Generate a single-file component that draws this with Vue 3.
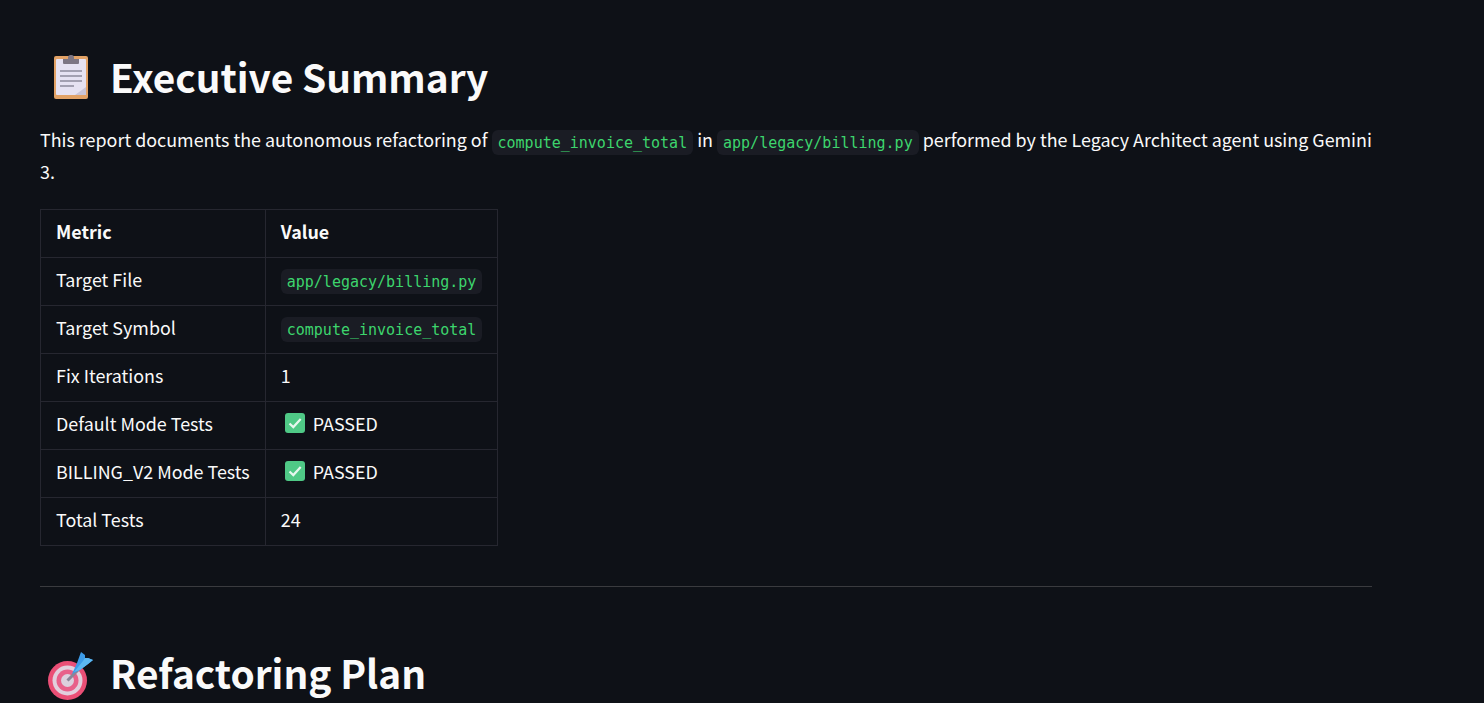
<script setup>
const rows = [
  { k: 'Target File', code: 'app/legacy/billing.py' },
  { k: 'Target Symbol', code: 'compute_invoice_total' },
  { k: 'Fix Iterations', v: '1' },
  { k: 'Default Mode Tests', pass: true },
  { k: 'BILLING_V2 Mode Tests', pass: true },
  { k: 'Total Tests', v: '24' },
]
</script>

<template>
  <main class="page">
    <article class="doc">
      <h1 class="title">
        <svg class="emoji" viewBox="0 0 42 46">
          <rect x="4" y="3" width="34" height="43" rx="2" fill="#e2a266" />
          <rect x="6" y="6" width="30" height="36" rx="1" fill="#e6e2f2" />
          <path d="M36 34v8H25z" fill="#c9c5d8" />
          <path d="M13 6h16v4a1 1 0 0 1-1 1H14a1 1 0 0 1-1-1z" fill="#7d7684" />
          <rect x="18" y="2" width="6" height="6" rx="2.5" fill="#7d7684" />
          <path d="M10 18h22M10 23h22M10 28h22M10 33h14" stroke="#8d8a9c" stroke-width="1.4" />
        </svg>
        <span>Executive Summary</span>
      </h1>
      <p class="lead">
        This report documents the autonomous refactoring of
        <code>compute_invoice_total</code> in <code>app/legacy/billing.py</code>
        performed by the Legacy Architect agent using Gemini 3.
      </p>
      <table class="table">
        <thead>
          <tr><th>Metric</th><th>Value</th></tr>
        </thead>
        <tbody>
          <tr v-for="r in rows" :key="r.k">
            <td>{{ r.k }}</td>
            <td>
              <code v-if="r.code">{{ r.code }}</code>
              <span v-else-if="r.pass" class="pass">
                <svg class="check" viewBox="0 0 20 20">
                  <rect width="20" height="20" rx="3" fill="#4fc986" />
                  <path d="M4.5 10.5l3.8 3.6 7.4-8" fill="none" stroke="#e6f7ee" stroke-width="2.2" />
                </svg>
                PASSED
              </span>
              <template v-else>{{ r.v }}</template>
            </td>
          </tr>
        </tbody>
      </table>
      <hr class="rule" />
      <h1 class="title">
        <svg class="emoji" viewBox="0 0 42 46">
          <circle cx="17.5" cy="31.5" r="19.5" fill="#ea4f76" />
          <circle cx="17.5" cy="31.5" r="15" fill="#e2cfdd" />
          <circle cx="17.5" cy="31.5" r="11" fill="#e8608a" />
          <circle cx="17.5" cy="31.5" r="6.5" fill="#dcd0de" />
          <path d="M17.5 31.5L28 21" stroke="#8a8598" stroke-width="3" />
          <path d="M22 25L27 14L31 3L35 6L35 9L38 9L43 11L38 15L30 21Z" fill="#3c9be8" />
          <path d="M24 23L33 12L35 9L38 9L43 11L38 15L30 21Z" fill="#5cb8f2" />
        </svg>
        <span>Refactoring Plan</span>
      </h1>
    </article>
  </main>
</template>

<style>
html, body { margin: 0; background: #0e1117; overflow: hidden; }
</style>

<style scoped>
.page {
  height: 703px;
  overflow: hidden;
  padding: 0 40px;
  background: #0e1117;
  color: #fafafa;
  font-family: "Noto Sans CJK SC", "Noto Sans", sans-serif;
}
.doc { width: 1332px; padding-top: 50px; }
.title {
  display: flex;
  align-items: center;
  gap: 18px;
  margin: 0 0 21px;
  padding-left: 10px;
  height: 52px;
  font-size: 38.8px;
  font-weight: 600;
  line-height: 52px;
}
.emoji { width: 42px; height: 46px; flex: none; overflow: visible; }
.lead { margin: 0 0 22px; font-size: 17.9px; line-height: 32px; }
code {
  display: inline-block;
  padding: 2px 6px 0;
  border-radius: 6px;
  background: #1a1c24;
  color: #3dd56d;
  font-family: "DejaVu Sans Mono", "Liberation Mono", monospace;
  font-size: 15px;
  line-height: 23px;
  vertical-align: -1px;
}
.table { border-collapse: collapse; font-size: 17.9px; }
.table th, .table td {
  height: 41px;
  padding: 0 15px 6px;
  border: 1px solid #262730;
  text-align: left;
  white-space: nowrap;
  line-height: 32px;
}
.table code { vertical-align: 0; }
.table th { font-weight: 700; }
.pass { display: inline-flex; align-items: center; gap: 8px; padding-left: 4px; vertical-align: -2px; }
.check { width: 20px; height: 20px; }
.rule { height: 1px; margin: 40px 0 59px; border: 0; background: #3a3b3f; }
</style>
